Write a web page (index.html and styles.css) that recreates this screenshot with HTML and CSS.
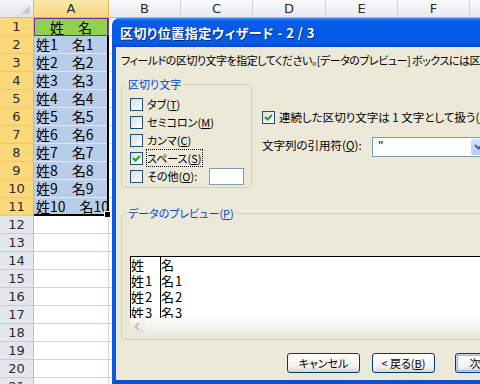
FILE: index.html
```html
<!DOCTYPE html>
<html lang="ja">
<head>
<meta charset="utf-8">
<link rel="stylesheet" href="styles.css">
</head>
<body>
<div class="sheet">
  <div class="corner"></div>
  <div class="ch sel">A</div>
  <div class="ch">B</div>
  <div class="ch">C</div>
  <div class="ch">D</div>
  <div class="ch">E</div>
  <div class="ch">F</div>
  <div class="ch">G</div>

  <div class="rh sel">1</div><div class="cell a head">姓　名</div><div class="cell fill"></div>
  <div class="rh sel">2</div><div class="cell a">姓1　名1</div><div class="cell fill"></div>
  <div class="rh sel">3</div><div class="cell a">姓2　名2</div><div class="cell fill"></div>
  <div class="rh sel">4</div><div class="cell a">姓3　名3</div><div class="cell fill"></div>
  <div class="rh sel">5</div><div class="cell a">姓4　名4</div><div class="cell fill"></div>
  <div class="rh sel">6</div><div class="cell a">姓5　名5</div><div class="cell fill"></div>
  <div class="rh sel">7</div><div class="cell a">姓6　名6</div><div class="cell fill"></div>
  <div class="rh sel">8</div><div class="cell a">姓7　名7</div><div class="cell fill"></div>
  <div class="rh sel">9</div><div class="cell a">姓8　名8</div><div class="cell fill"></div>
  <div class="rh sel">10</div><div class="cell a">姓9　名9</div><div class="cell fill"></div>
  <div class="rh sel">11</div><div class="cell a">姓10　名10</div><div class="cell fill"></div>
  <div class="rh">12</div><div class="cell"></div><div class="cell fill"></div>
  <div class="rh">13</div><div class="cell"></div><div class="cell fill"></div>
  <div class="rh">14</div><div class="cell"></div><div class="cell fill"></div>
  <div class="rh">15</div><div class="cell"></div><div class="cell fill"></div>
  <div class="rh">16</div><div class="cell"></div><div class="cell fill"></div>
  <div class="rh">17</div><div class="cell"></div><div class="cell fill"></div>
  <div class="rh">18</div><div class="cell"></div><div class="cell fill"></div>
  <div class="rh">19</div><div class="cell"></div><div class="cell fill"></div>
  <div class="rh">20</div><div class="cell"></div><div class="cell fill"></div>
  <div class="rh">21</div><div class="cell"></div><div class="cell fill"></div>
</div>
<div class="selection"><span class="handle"></span></div>

<div class="dialog">
  <div class="titlebar">区切り位置指定ウィザード - 2 / 3</div>
  <div class="dbody">
    <p class="intro">フィールドの区切り文字を指定してください。[データのプレビュー] ボックスには区切り位置が表示されます。</p>
    <div class="top">
      <fieldset class="group delim">
        <legend>区切り文字</legend>
        <div class="row"><span class="cb"></span><span>タブ(<u>T</u>)</span></div>
        <div class="row"><span class="cb"></span><span>セミコロン(<u>M</u>)</span></div>
        <div class="row"><span class="cb"></span><span>カンマ(<u>C</u>)</span></div>
        <div class="row"><span class="cb"><svg viewBox="0 0 11 11" width="11" height="11"><path d="M2 5 L4.5 7.5 L9 3" stroke="#21a121" stroke-width="2" fill="none"/></svg></span><span class="focus">スペース(<u>S</u>)</span></div>
        <div class="row"><span class="cb"></span><span>その他(<u>O</u>):</span><span class="tinput"></span></div>
      </fieldset>
      <div class="opts">
        <div class="row"><span class="cb"><svg viewBox="0 0 11 11" width="11" height="11"><path d="M2 5 L4.5 7.5 L9 3" stroke="#21a121" stroke-width="2" fill="none"/></svg></span><span>連続した区切り文字は 1 文字として扱う(<u>R</u>)</span></div>
        <div class="qrow"><span class="qlabel">文字列の引用符(<u>Q</u>):</span><span class="combo"><span class="cval">"</span><span class="cbtn"><svg viewBox="0 0 15 16" width="15" height="16"><path d="M4 6 L7.5 9.5 L11 6" stroke="#4d6185" stroke-width="2" fill="none"/></svg></span></span></div>
      </div>
    </div>
    <fieldset class="group preview">
      <legend>データのプレビュー(<u>P</u>)</legend>
      <div class="pbox">
        <div class="pcol first"><div>姓</div><div>姓1</div><div>姓2</div><div>姓3</div></div>
        <div class="pcol"><div>名</div><div>名1</div><div>名2</div><div>名3</div></div>
      </div>
      <div class="hscroll"><span class="sarrow"><svg viewBox="0 0 15 15" width="15" height="15"><path d="M9 4 L5.5 7.5 L9 11" stroke="#c3c3bb" stroke-width="2" fill="none"/></svg></span></div>
    </fieldset>
    <div class="btns">
      <button class="btn b1">キャンセル</button>
      <button class="btn b2">&lt; 戻る(<u>B</u>)</button>
      <button class="btn b3 def">次へ(<u>N</u>) &gt;</button>
    </div>
  </div>
</div>
</body>
</html>
```

FILE: styles.css
```css
html, body {
  margin: 0;
  padding: 0;
  overflow: hidden;
}
body {
  width: 480px;
  height: 384px;
  position: relative;
  background: #fff;
  font-family: "Noto Sans CJK JP", "Noto Sans", sans-serif;
  color: #000;
}

/* ---------- spreadsheet ---------- */
.sheet {
  display: grid;
  grid-template-columns: 34px 75px 72px 72px 73px 72px 72px 30px;
  grid-auto-rows: 18px;
}
.sheet > div {
  box-sizing: border-box;
}
.corner {
  background: linear-gradient(#f4f5f7, #e2e5ea);
  border-right: 1px solid #b8bfca;
  border-bottom: 1px solid #b8bfca;
  position: relative;
}
.corner::after {
  content: "";
  position: absolute;
  right: 3px;
  bottom: 3px;
  border-left: 9px solid transparent;
  border-bottom: 9px solid #c9ccd2;
}
.ch {
  background: linear-gradient(#f9fafb, #e6e9ee);
  border-right: 1px solid #d0d4da;
  border-bottom: 1px solid #b8bfca;
  font-size: 13px;
  line-height: 17px;
  text-align: center;
  color: #2a2a2a;
  font-family: "DejaVu Sans", sans-serif;
}
.ch.sel {
  background: linear-gradient(#fbe7a9, #f7d67e);
  border-bottom-color: #e2b551;
  border-right-color: #e2b551;
}
.rh {
  background: #e3e7ed;
  border-right: 1px solid #b8bfca;
  border-bottom: 1px solid #c6ccd6;
  font-size: 13px;
  line-height: 17px;
  text-align: center;
  color: #2a2a2a;
  font-family: "DejaVu Sans", sans-serif;
}
.rh.sel {
  background: #fbd879;
  border-right-color: #e2b551;
  border-bottom-color: #efc767;
}
.cell {
  border-right: 1px solid #d4d4d4;
  border-bottom: 1px solid #d4d4d4;
}
.fill {
  grid-column: 3 / -1;
}
.a {
  background: #b9cde8;
  border-bottom-color: #dfe6f0;
  font-size: 14px;
  line-height: 17px;
  padding-left: 2px;
  white-space: nowrap;
  overflow: visible;
  position: relative;
}
.a.head {
  background: #92d050;
  text-align: center;
  padding-left: 0;
  border: 1px solid #7030a0;
  border-right-width: 2px;
  line-height: 16px;
}
.selection {
  position: absolute;
  left: 34px;
  top: 36px;
  width: 75px;
  height: 180px;
  box-sizing: border-box;
  border-right: 2px solid #000;
  border-bottom: 2px solid #000;
}
.handle {
  position: absolute;
  right: -4px;
  bottom: -4px;
  width: 5px;
  height: 5px;
  background: #000;
  border: 1px solid #fff;
}

/* ---------- dialog ---------- */
.dialog {
  position: absolute;
  left: 112px;
  top: 18px;
  width: 400px;
  height: 366px;
  display: flex;
  flex-direction: column;
  font-size: 11px;
  font-feature-settings: "palt";
}
.titlebar {
  height: 29px;
  flex: none;
  box-sizing: border-box;
  border-radius: 7px 0 0 0;
  background: linear-gradient(#3b8df8 0%, #0a5fe8 10%, #0058e6 50%, #0a5ce6 85%, #0048d0 100%);
  color: #fff;
  font-weight: bold;
  font-size: 13px;
  letter-spacing: 0.5px;
  line-height: 29px;
  padding-left: 8px;
  white-space: nowrap;
  text-shadow: 1px 1px 0 #0a2a8a;
}
.dbody {
  flex: 1;
  background: #ece9d8;
  border-left: 4px solid #0a5ae6;
  border-bottom: 4px solid #0a4fd8;
  padding: 6px 0 0 5px;
  overflow: hidden;
}
.intro {
  margin: 0;
  line-height: 14px;
  white-space: nowrap;
  letter-spacing: -0.5px;
}
.top {
  display: flex;
  margin-top: 10px;
}
.group {
  margin: 0;
  border: 1px solid #d0d0bf;
  border-radius: 4px;
  box-sizing: border-box;
}
.group legend {
  color: #0046d5;
  line-height: 14px;
  padding: 0 2px;
  margin-left: -4px;
}
.delim {
  width: 131px;
  padding: 4px 0 2px 8px;
}
.row {
  display: flex;
  align-items: center;
  height: 18px;
  gap: 4px;
  white-space: nowrap;
}
.cb {
  width: 13px;
  height: 13px;
  flex: none;
  box-sizing: border-box;
  border: 1px solid #1c5180;
  background: linear-gradient(135deg, #dcdcd7, #fff);
  display: flex;
}
.focus {
  outline: 1px dotted #000;
  outline-offset: 0;
}
.tinput {
  width: 35px;
  height: 17px;
  box-sizing: border-box;
  border: 1px solid #7f9db9;
  background: #fff;
  margin-left: 8px;
}
.opts {
  margin-left: 10px;
  padding-top: 31px;
  font-size: 11.5px;
}
.qrow {
  display: flex;
  align-items: center;
  margin-top: 11px;
  height: 20px;
}
.qlabel {
  width: 110px;
  flex: none;
  white-space: nowrap;
  margin-top: -4px;
}
.combo {
  width: 118px;
  height: 20px;
  box-sizing: border-box;
  border: 1px solid #7f9db9;
  background: #fff;
  display: flex;
  justify-content: space-between;
}
.cval {
  padding-left: 5px;
  line-height: 16px;
}
.cbtn {
  width: 17px;
  margin: 1px;
  background: linear-gradient(#d6e2fd, #b7cbf9);
  border-radius: 2px;
  display: flex;
}
.preview {
  margin-top: 18px;
  width: 420px;
  padding: 36px 0 4px 8px;
}
.pbox {
  height: 62px;
  box-sizing: border-box;
  border-top: 1px solid #000;
  border-left: 1px solid #000;
  background: #fff;
  overflow: hidden;
  display: flex;
  font-size: 13px;
  line-height: 16px;
  letter-spacing: 1px;
  font-feature-settings: normal;
}
.pcol.first {
  width: 29px;
  border-right: 1px solid #000;
}
.hscroll {
  height: 17px;
  background: linear-gradient(#fbfbf9, #eeede6);
  display: flex;
  align-items: center;
}
.sarrow {
  width: 15px;
  height: 15px;
  background: linear-gradient(#f7f6f2, #e6e4dc);
  border-radius: 2px;
  display: flex;
}
.btns {
  display: flex;
  margin-top: 13px;
  padding-left: 166px;
}
.btn {
  height: 20px;
  box-sizing: border-box;
  border: 1px solid #003c74;
  border-radius: 3px;
  background: linear-gradient(#ffffff, #f3f2ee 70%, #d9d5c8);
  font: inherit;
  line-height: 16px;
  padding: 0;
  color: #000;
  flex: none;
}
.b1 { width: 73px; }
.b2 { width: 63px; margin-left: 12px; }
.b3 { width: 75px; margin-left: 20px; }
.def {
  box-shadow: inset 0 0 0 1px #c2d3fc, inset 0 0 0 2px #97b4f4;
}
```
